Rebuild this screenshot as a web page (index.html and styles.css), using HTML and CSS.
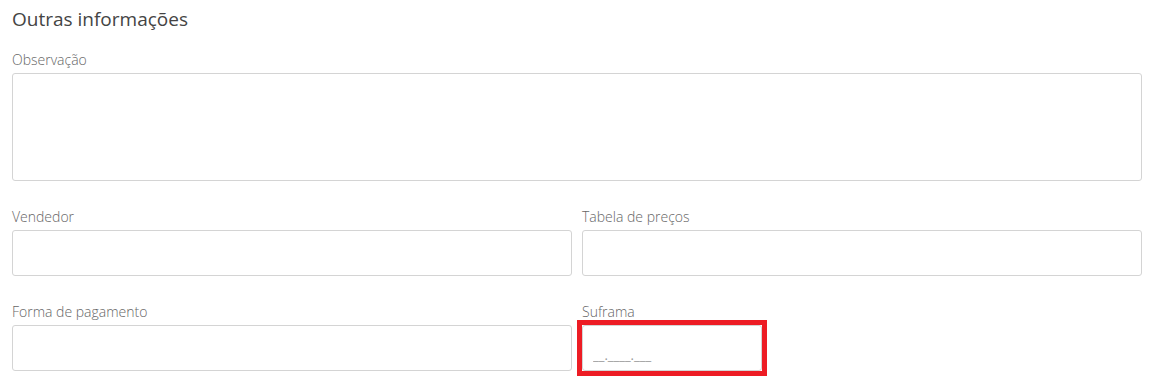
FILE: index.html
```html
<!DOCTYPE html>
<html lang="pt-BR">
<head>
<meta charset="utf-8">
<link rel="stylesheet" href="styles.css">
</head>
<body>
<section class="panel">
  <h2 class="title">Outras informações</h2>
  <div class="field">
    <label class="label">Observação</label>
    <textarea class="control area"></textarea>
  </div>
  <div class="row">
    <div class="field">
      <label class="label">Vendedor</label>
      <input class="control" type="text">
    </div>
    <div class="field">
      <label class="label">Tabela de preços</label>
      <input class="control" type="text">
    </div>
  </div>
  <div class="row">
    <div class="field">
      <label class="label">Forma de pagamento</label>
      <input class="control" type="text">
    </div>
    <div class="field">
      <label class="label">Suframa</label>
      <div class="highlight">
        <input class="control small" type="text" placeholder="__.____.___">
      </div>
    </div>
  </div>
</section>
</body>
</html>
```
FILE: styles.css
```css
* { box-sizing: border-box; }
html, body { margin: 0; padding: 0; background: #fff; }
body { font-family: "Open Sans", "Liberation Sans", sans-serif; color: #333; }
.panel { padding: 7px 12px 0 12px; width: 1154px; }
.title { margin: 0 0 19px 0; font-size: 19px; font-weight: 400; line-height: 24px; color: #444; }
.field { display: flex; flex-direction: column; }
.label { font-size: 14px; font-weight: 300; color: #666; line-height: 20px; height: 20px; margin-bottom: 3px; }
.control { border: 1px solid #d4d4d4; border-radius: 3px; height: 46px; width: 100%; font-family: inherit; outline: none; background: #fff; }
.area { height: 108px; resize: none; display: block; margin-bottom: 26px; }
.row { display: grid; grid-template-columns: 560px 560px; column-gap: 10px; margin-bottom: 26px; }
.row .field { min-width: 0; }
.highlight { border: 5px solid #ed1c24; width: 190px; margin-left: -5px; margin-top: -5px; }
.control.small { width: 180px; padding: 14px 10px 0 10px; font-size: 13px; }
.control.small::placeholder { color: #999; }
```
